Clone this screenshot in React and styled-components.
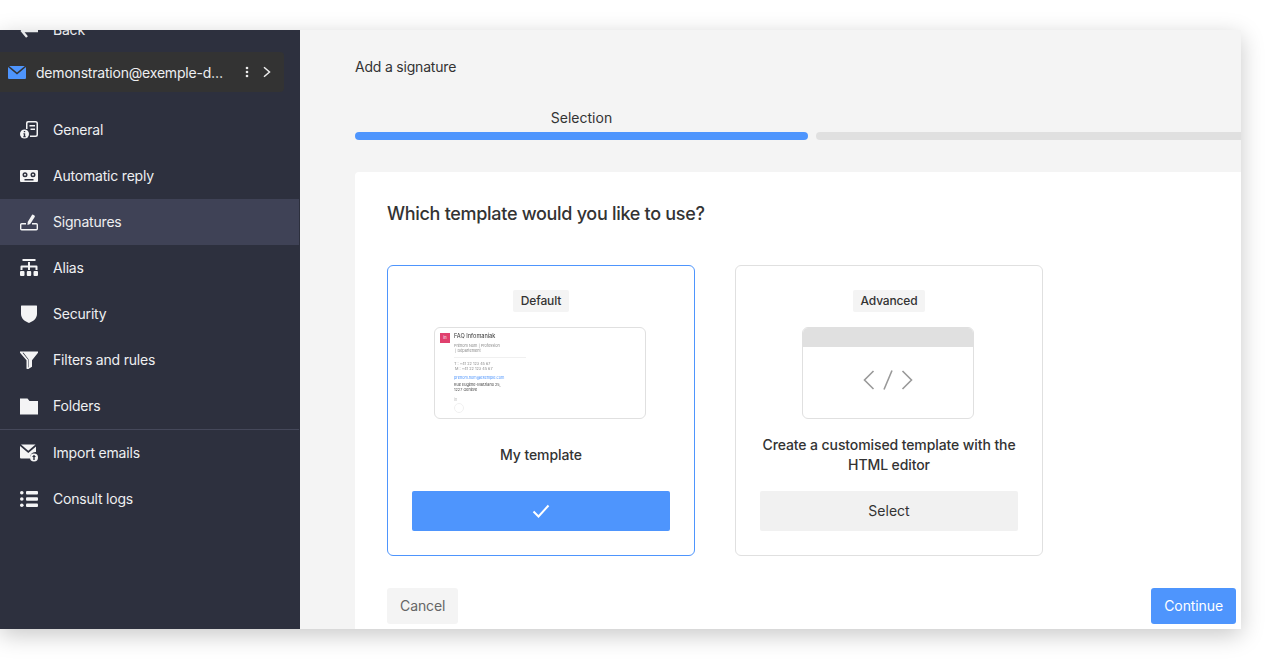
import React from "react";
import styled, { createGlobalStyle } from "styled-components";

const Global = createGlobalStyle`
  html, body { margin: 0; padding: 0; background: #fff; }
  body { font-family: Inter, "Liberation Sans", sans-serif; overflow: hidden; }
  * { box-sizing: border-box; }
`;

const Stage = styled.div`
  width: 1271px;
  height: 659px;
  padding-top: 30px;
  background: #fff;
`;
const Frame = styled.div`
  width: 1241px;
  height: 599px;
  display: flex;
  overflow: hidden;
  box-shadow: 0 6px 22px rgba(0, 0, 0, 0.22);
`;
const Sidebar = styled.aside`
  width: 300px;
  flex: none;
  background: #2d303e;
  color: #eeeff1;
  font-size: 14px;
  letter-spacing: -0.2px;
`;
const BackRow = styled.div`
  height: 22px;
  margin-top: -12px;
  padding-left: 20px;
  display: flex;
  align-items: center;
  gap: 15px;
  color: #e8e9eb;
`;
const BackArrow = styled.svg`
  margin-top: 3px;
  flex: none;
`;
const Account = styled.div`
  width: 284px;
  height: 40px;
  margin: 12px 0 15px;
  padding: 0 13px 0 8px;
  display: flex;
  align-items: center;
  background: #333333;
  border-radius: 0 4px 4px 0;
`;
const AccountName = styled.span`
  margin-left: 10px;
  width: 188px;
  white-space: nowrap;
  overflow: hidden;
  text-overflow: ellipsis;
`;
const AccountActions = styled.span`
  display: flex;
  align-items: center;
  margin-left: 21px;
  gap: 14px;
`;
const Menu = styled.nav`
  display: flex;
  flex-direction: column;
`;
const Item = styled.div`
  height: 46px;
  padding-left: 20px;
  display: flex;
  align-items: center;
  gap: 15px;
  background: ${(p) => (p.$active ? "#3f4256" : "transparent")};
  margin-right: 1px;
`;
const ItemLabel = styled.span`
  padding-bottom: 2px;
`;
const Divider = styled.div`
  height: 1px;
  background: #45485a;
  margin-right: 1px;
`;
const IconBox = styled.svg`
  width: 18px;
  height: 18px;
  flex: none;
  fill: #f4f4f5;
`;

const Main = styled.main`
  flex: 1;
  min-width: 0;
  background: #f4f4f4;
  padding-left: 55px;
`;
const PageTitle = styled.div`
  padding-top: 28px;
  height: 72px;
  font-size: 14px;
  line-height: 17px;
  letter-spacing: -0.2px;
  color: #333;
`;
const Steps = styled.div`
  display: flex;
  gap: 8px;
`;
const Step = styled.div`
  flex: ${(p) => (p.$grow ? "1" : "none")};
  width: ${(p) => (p.$grow ? "auto" : "453px")};
`;
const StepLabel = styled.div`
  height: 30px;
  padding-top: 7px;
  text-align: center;
  font-size: 14px;
  line-height: 17px;
  color: #333;
`;
const StepBar = styled.div`
  height: 8px;
  border-radius: ${(p) => (p.$active ? "4px" : "4px 0 0 4px")};
  background: ${(p) => (p.$active ? "#4e95fd" : "#e0e0e0")};
`;
const Panel = styled.section`
  margin-top: 32px;
  height: 460px;
  background: #fff;
  border-radius: 4px 0 0 0;
  padding: 32px 5px 0 32px;
`;
const Question = styled.h2`
  margin: 0;
  height: 61px;
  font-size: 18px;
  line-height: 20px;
  font-weight: 500;
  letter-spacing: -0.3px;
  color: #333;
`;
const Cards = styled.div`
  display: flex;
  gap: 40px;
`;
const Card = styled.div`
  width: 308px;
  height: 291px;
  padding: 24px 24px 24px;
  border: 1px solid ${(p) => (p.$selected ? "#4e95fd" : "#e0e0e0")};
  border-radius: 6px;
  display: flex;
  flex-direction: column;
  align-items: center;
`;
const Tag = styled.div`
  height: 22px;
  padding: 0 8px;
  background: #f4f4f4;
  border-radius: 2px;
  font-size: 12px;
  line-height: 21px;
  font-weight: 500;
  letter-spacing: -0.15px;
  color: #333;
`;
const Preview = styled.div`
  margin: 15px 2px 0 0;
  width: 212px;
  height: 92px;
  border: 1px solid #e0e0e0;
  border-radius: 6px;
  padding: 5px 5px 0;
  display: flex;
  gap: 4px;
  overflow: hidden;
`;
const Logo = styled.div`
  width: 10px;
  height: 10px;
  background: #e0406e;
  flex: none;
  color: #fff;
  font-size: 4px;
  line-height: 10px;
  text-align: center;
`;
const Sig = styled.div`
  color: #888;
  font-size: 3.8px;
  line-height: 5px;
  width: 100px;
  filter: blur(0.25px);
`;
const SigName = styled.div`
  font-size: 5.6px;
  line-height: 7px;
  color: #333;
  margin-bottom: 3px;
`;
const SigRule = styled.div`
  height: 1px;
  background: #f0f0f0;
  margin: 4px 0;
  width: 72px;
`;
const SigPhone = styled.div`
  line-height: 4.5px;
`;
const SigMail = styled.div`
  color: #4e95fd;
  margin: 4px 0 2px;
`;
const SigAddress = styled.div`
  color: #444;
`;
const SigIn = styled.div`
  color: #bbb;
  margin-top: 5px;
`;
const SigCircle = styled.div`
  width: 10px;
  height: 10px;
  border: 1px solid #f0f0f0;
  border-radius: 50%;
  margin-top: 1px;
`;
const CodeFrame = styled.div`
  margin: 15px 2px 0 0;
  width: 172px;
  height: 92px;
  border: 1px solid #e0e0e0;
  border-radius: 6px;
  overflow: hidden;
  display: flex;
  flex-direction: column;
`;
const CodeBar = styled.div`
  height: 19px;
  background: #e0e0e0;
  flex: none;
`;
const CodeBody = styled.div`
  flex: 1;
  padding-bottom: 6px;
  display: flex;
  align-items: center;
  justify-content: center;
`;
const CardText = styled.div`
  flex: 1;
  display: flex;
  align-items: center;
  justify-content: center;
  text-align: center;
  font-size: 14px;
  line-height: 20px;
  font-weight: 500;
  letter-spacing: -0.1px;
  color: #333;
`;
const Choice = styled.button`
  width: 258px;
  height: 40px;
  flex: none;
  border: 0;
  border-radius: 2px;
  padding: 0 0 1px;
  display: flex;
  align-items: center;
  justify-content: center;
  font: 400 14px Inter, "Liberation Sans", sans-serif;
  color: #333;
  background: ${(p) => (p.$selected ? "#4e95fd" : "#f1f1f1")};
`;
const Footer = styled.div`
  margin-top: 32px;
  display: flex;
  justify-content: space-between;
`;
const FooterButton = styled.button`
  height: 36px;
  border: 0;
  border-radius: 3px;
  padding: 0 13px 2px;
  font: 400 14px Inter, "Liberation Sans", sans-serif;
  letter-spacing: -0.1px;
  color: ${(p) => (p.$primary ? "#fff" : "#666")};
  background: ${(p) => (p.$primary ? "#4e95fd" : "#f4f4f4")};
`;

const icons = {
  general: (
    <>
      <path
        fillRule="evenodd"
        d="M8 0h7.500A2.500 2.500 0 0 1 18 2.500v11a2.500 2.500 0 0 1-2.500 2.500H10v-1.500h5.500a1 1 0 0 0 1-1v-11a1 1 0 0 0-1-1H8.500a1 1 0 0 0-1 1V8H6V2a2 2 0 0 1 2-2Z"
      />
      <path d="M9.500 4h5.500v1.400H9.500zM10.500 7.500h4.500v1.400h-4.500z" />
      <circle cx="4.500" cy="13" r="4.500" />
      <path d="M3.800 10h1.400v1.300H3.800zM3.400 12.300h1.800v3h.6v1H3.200v-1h.6v-2h-.4z" fill="#2d303e" />
    </>
  ),
  reply: (
    <path
      fillRule="evenodd"
      d="M1 3h16a1 1 0 0 1 1 1v10a1 1 0 0 1-1 1H1a1 1 0 0 1-1-1V4a1 1 0 0 1 1-1ZM5 5.300a2.500 2.500 0 1 0 0 5 2.500 2.500 0 0 0 0-5Zm8 0a2.500 2.500 0 1 0 0 5 2.500 2.500 0 0 0 0-5ZM5 6.800a1 1 0 1 1 0 2 1 1 0 0 1 0-2Zm8 0a1 1 0 1 1 0 2 1 1 0 0 1 0-2ZM4.500 12v1.500h9V12Z"
    />
  ),
  signature: (
    <>
      <path d="M11.800 2.200a1 1 0 0 1 1.400-.4l1.200.8a1 1 0 0 1 .3 1.400L10.200 11l-2.700.9.200-2.900Z" />
      <path
        d="M6 10.700H1.700a1 1 0 0 0-1 1v4.100a1 1 0 0 0 1 1h14.600a1 1 0 0 0 1-1v-4.100a1 1 0 0 0-1-1H12"
        fill="none"
        stroke="#f4f4f5"
        strokeWidth="1.400"
      />
    </>
  ),
  alias: (
    <path d="M2.500 0h13v2h-13zM8 3h2v3.500h6.500a1 1 0 0 1 1 1V11h-2V8.500H10V11H8V8.500H2.500V11h-2V7.500a1 1 0 0 1 1-1H8ZM0 13a1 1 0 0 1 1-1h2.500a1 1 0 0 1 1 1v3a1 1 0 0 1-1 1H1a1 1 0 0 1-1-1Zm6.800 0a1 1 0 0 1 1-1h2.400a1 1 0 0 1 1 1v3a1 1 0 0 1-1 1H7.800a1 1 0 0 1-1-1Zm6.700 0a1 1 0 0 1 1-1H17a1 1 0 0 1 1 1v3a1 1 0 0 1-1 1h-2.500a1 1 0 0 1-1-1Z" />
  ),
  security: <path d="M1.500 .5h15a.5.500 0 0 1 .5.5v8c0 4.500-4 7.500-8 9-4-1.500-8-4.500-8-9V1a.5.500 0 0 1 .5-.5Z" />,
  filter: (
    <path
      fillRule="evenodd"
      d="M0 .5h18v1.300L12 9.200v6.500L8 18.200l-1.500-.5V9.200L0 1.800ZM2.500 1.800 8 8.500v8l.5-.3v-8L3.500 1.800Z"
    />
  ),
  folder: <path d="M0 1.500h7.500L9.500 4H18v13.500H0Z" />,
  import: (
    <>
      <path d="M1 .5h14.500L8.300 6.700Z" />
      <path d="M0 2l8.300 7L16 2.500V8a5.500 5.500 0 0 0-6 6.500H1a1 1 0 0 1-1-1Z" />
      <circle cx="14" cy="13.500" r="4" />
      <path d="M14 10.800l2 2.200h-1.300v3h-1.400v-3H12Z" fill="#2d303e" />
    </>
  ),
  logs: (
    <>
      <circle cx="1.800" cy="2.800" r="1.800" />
      <circle cx="1.800" cy="9" r="1.800" />
      <circle cx="1.800" cy="15.200" r="1.800" />
      <rect x="6" y="1" width="12" height="3.600" rx="1" />
      <rect x="6" y="7.200" width="12" height="3.600" rx="1" />
      <rect x="6" y="13.400" width="12" height="3.600" rx="1" />
    </>
  ),
};

const Icon = ({ name }) => <IconBox viewBox="0 0 18 18">{icons[name]}</IconBox>;

const primary = [
  ["general", "General"],
  ["reply", "Automatic reply"],
  ["signature", "Signatures", true],
  ["alias", "Alias"],
  ["security", "Security"],
  ["filter", "Filters and rules"],
  ["folder", "Folders"],
];
const secondary = [
  ["import", "Import emails"],
  ["logs", "Consult logs"],
];

export default function App() {
  return (
    <Stage>
      <Global />
      <Frame>
        <Sidebar>
          <BackRow>
            <BackArrow width="18" height="14" viewBox="0 0 18 14">
              <path d="M7 1 2 7l5 6M2 7h16" fill="none" stroke="#e8e9eb" strokeWidth="2.400" />
            </BackArrow>
            <span>Back</span>
          </BackRow>
          <Account>
            <svg width="18" height="13" viewBox="0 0 18 13">
              <path d="M1.200 0h15.600L9 6.500Z" fill="#4e95fd" />
              <path d="M0 1l9 7.500L18 1v11a1 1 0 0 1-1 1H1a1 1 0 0 1-1-1Z" fill="#4e95fd" />
            </svg>
            <AccountName>demonstration@exemple-domaine.ch</AccountName>
            <AccountActions>
              <svg width="4" height="12" viewBox="0 0 4 12" fill="#eee">
                <circle cx="2" cy="2" r="1.300" />
                <circle cx="2" cy="6" r="1.300" />
                <circle cx="2" cy="10" r="1.300" />
              </svg>
              <svg width="8" height="12" viewBox="0 0 8 12">
                <path d="M1 1.200 6.500 6 1 10.800" fill="none" stroke="#eee" strokeWidth="1.500" />
              </svg>
            </AccountActions>
          </Account>
          <Menu>
            {primary.map(([icon, label, active]) => (
              <Item key={label} $active={active}>
                <Icon name={icon} />
                <ItemLabel>{label}</ItemLabel>
              </Item>
            ))}
            <Divider />
            {secondary.map(([icon, label]) => (
              <Item key={label}>
                <Icon name={icon} />
                <ItemLabel>{label}</ItemLabel>
              </Item>
            ))}
          </Menu>
        </Sidebar>
        <Main>
          <PageTitle>Add a signature</PageTitle>
          <Steps>
            <Step>
              <StepLabel>Selection</StepLabel>
              <StepBar $active />
            </Step>
            <Step $grow>
              <StepLabel />
              <StepBar />
            </Step>
          </Steps>
          <Panel>
            <Question>Which template would you like to use?</Question>
            <Cards>
              <Card $selected>
                <Tag>Default</Tag>
                <Preview>
                  <Logo>in</Logo>
                  <Sig>
                    <SigName>FAQ Infomaniak</SigName>
                    <div>Prénom Nom | Profession</div>
                    <div>&nbsp;| Département</div>
                    <SigRule />
                    <SigPhone>T : +41 22 123 45 67</SigPhone>
                    <SigPhone>&nbsp;M : +41 22 123 45 67</SigPhone>
                    <SigMail>prenom.nom@exemple.com</SigMail>
                    <SigAddress>Rue Eugène-Marziano 25,</SigAddress>
                    <SigAddress>1227 Genève</SigAddress>
                    <SigIn>in</SigIn>
                    <SigCircle />
                  </Sig>
                </Preview>
                <CardText>My template</CardText>
                <Choice $selected aria-label="Selected">
                  <svg width="18" height="14" viewBox="0 0 18 14">
                    <path d="M1.500 7.500 6.500 12.500 16.500 1.500" fill="none" stroke="#fff" strokeWidth="2" />
                  </svg>
                </Choice>
              </Card>
              <Card>
                <Tag>Advanced</Tag>
                <CodeFrame>
                  <CodeBar />
                  <CodeBody>
                    <svg width="50" height="20" viewBox="0 0 50 20" fill="none" stroke="#999" strokeWidth="1.600">
                      <path d="M10.500 1 1.500 10l9 9M21 19.500 29 .5M39.500 1 48.500 10l-9 9" />
                    </svg>
                  </CodeBody>
                </CodeFrame>
                <CardText>
                  Create a customised template with the
                  <br />
                  HTML editor
                </CardText>
                <Choice>Select</Choice>
              </Card>
            </Cards>
            <Footer>
              <FooterButton>Cancel</FooterButton>
              <FooterButton $primary>Continue</FooterButton>
            </Footer>
          </Panel>
        </Main>
      </Frame>
    </Stage>
  );
}
